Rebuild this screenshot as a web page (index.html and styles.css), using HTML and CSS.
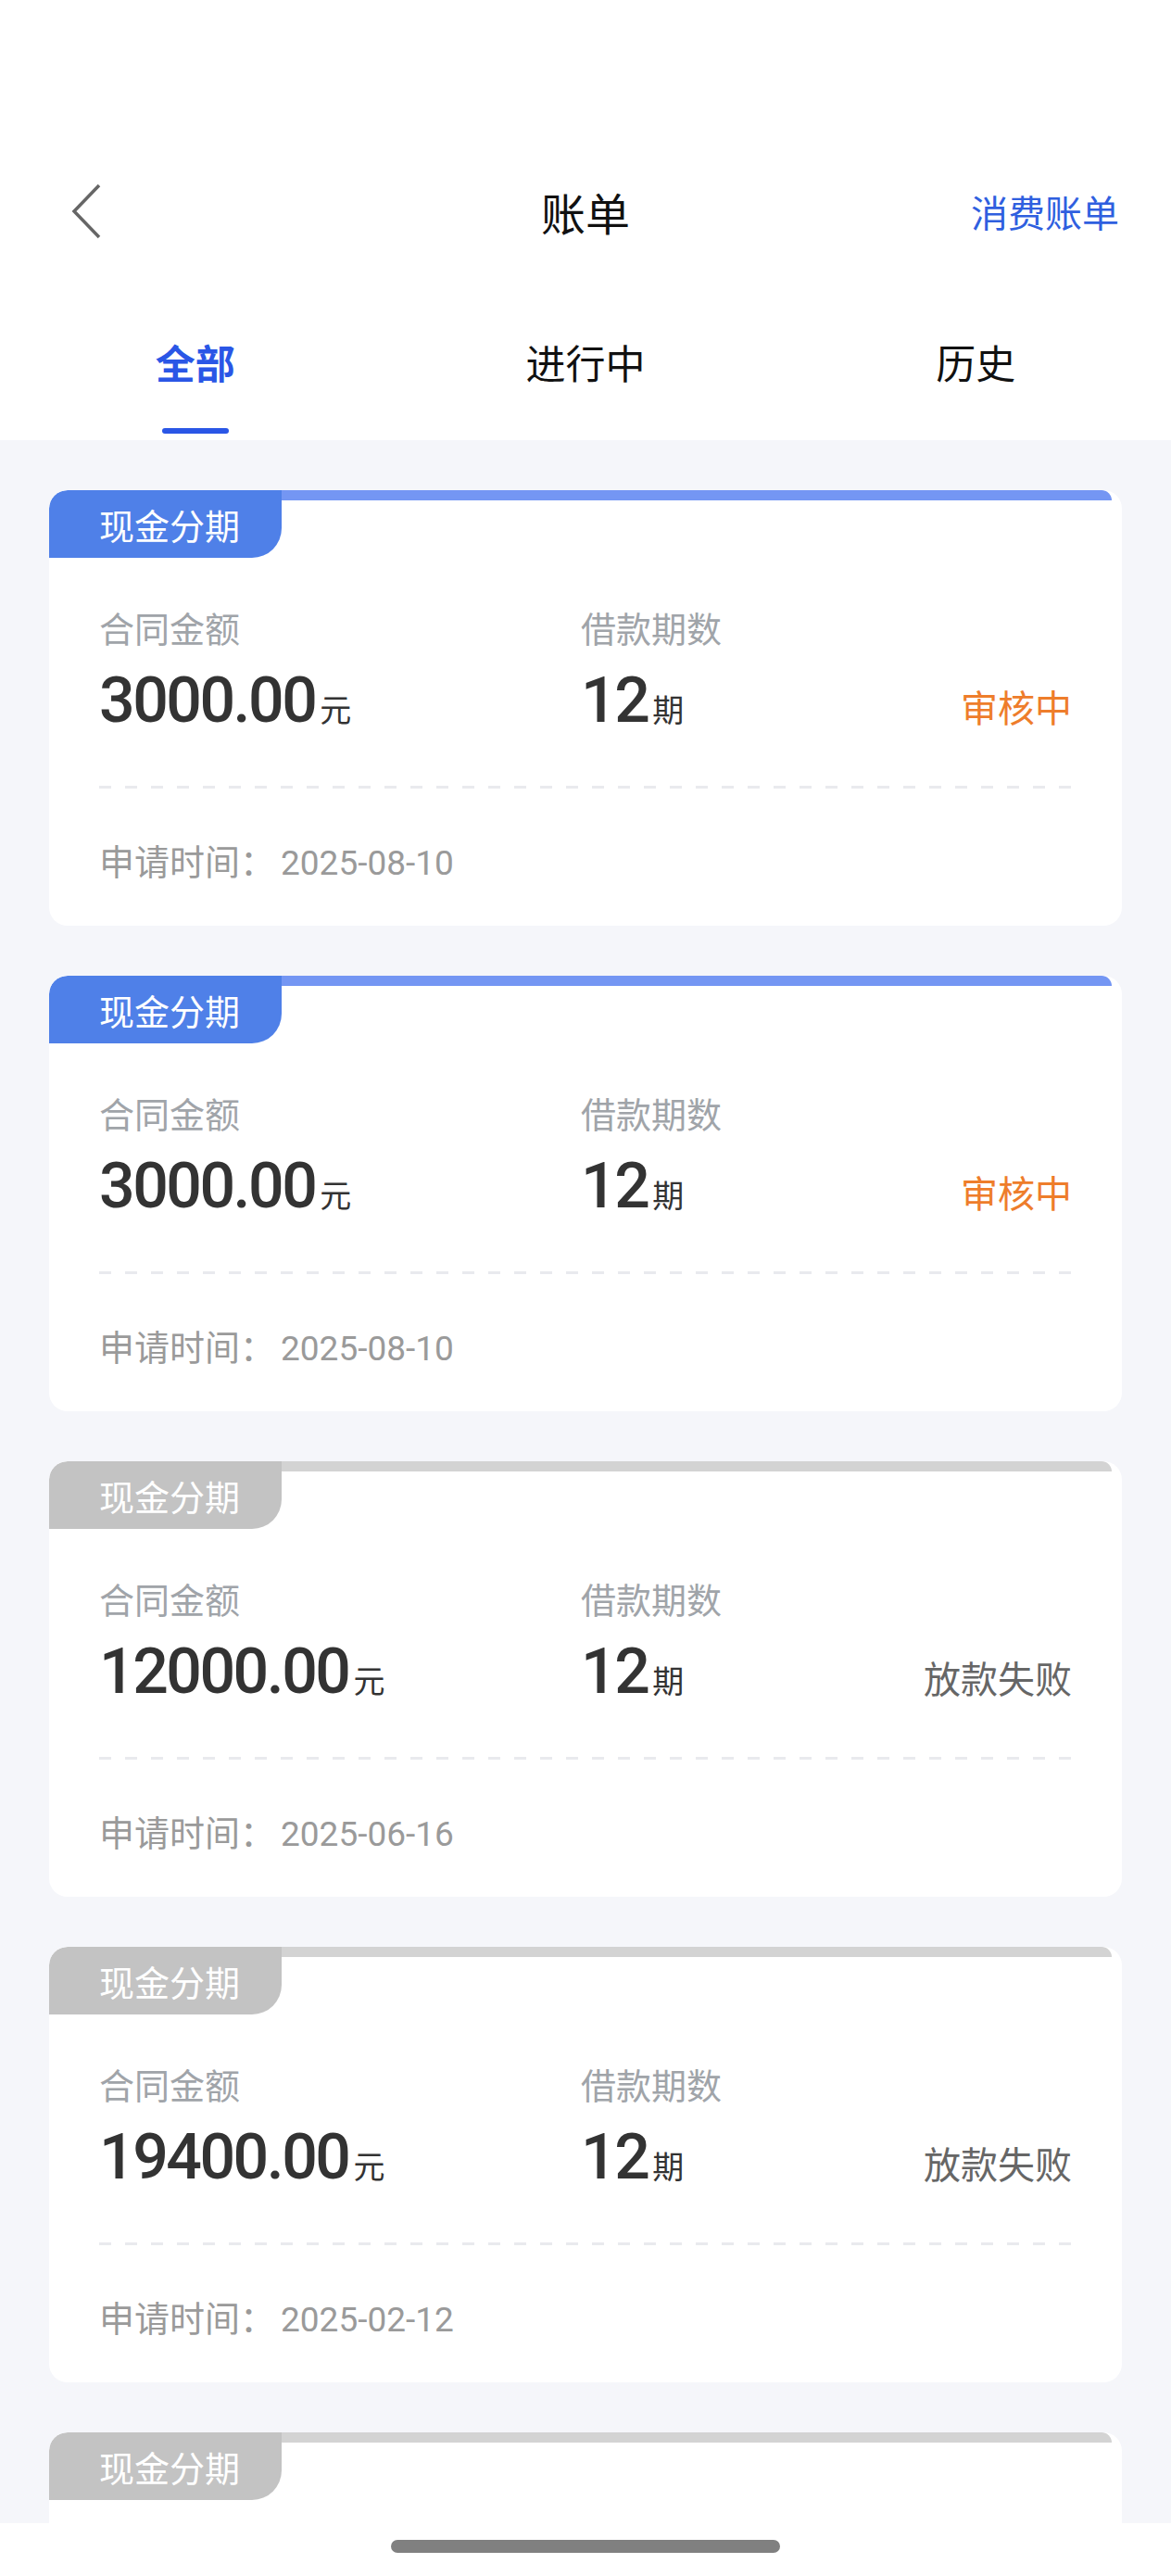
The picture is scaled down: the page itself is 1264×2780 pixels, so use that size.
FILE: index.html
```html
<!DOCTYPE html>
<html lang="zh-CN">

<head>
    <meta charset="UTF-8">
    <meta name="viewport" content="width=device-width, initial-scale=1.0">
    <title>账单</title>
    <link rel="stylesheet" href="styles.css">
</head>

<body>
    <div class="page">
        <div class="header">
            <div class="nav">
                <div class="back">
                    <svg width="34" height="60" viewBox="0 0 34 60">
                        <polyline points="31,2 4,30 31,58" fill="none" stroke="#666" stroke-width="3.5" stroke-linejoin="miter" />
                    </svg>
                </div>
                <div class="title">账单</div>
                <a class="more" href="#">消费账单</a>
            </div>
            <div class="tabs">
                <div class="tab active"><span>全部</span><i></i></div>
                <div class="tab"><span>进行中</span><i></i></div>
                <div class="tab"><span>历史</span><i></i></div>
            </div>
        </div>

        <div class="list">
            <div class="card">
                <div class="top">
                    <div class="tag">现金分期</div>
                    <div class="bar"></div>
                </div>
                <div class="body">
                    <div class="info">
                        <div class="label">合同金额</div>
                        <div class="label">借款期数</div>
                        <div></div>
                        <div class="value">3000.00<span class="unit">元</span></div>
                        <div class="value">12<span class="unit">期</span></div>
                        <div class="status orange">审核中</div>
                    </div>
                    <div class="dash"></div>
                    <div class="date">申请时间：<span>2025-08-10</span></div>
                </div>
            </div>

            <div class="card">
                <div class="top">
                    <div class="tag">现金分期</div>
                    <div class="bar"></div>
                </div>
                <div class="body">
                    <div class="info">
                        <div class="label">合同金额</div>
                        <div class="label">借款期数</div>
                        <div></div>
                        <div class="value">3000.00<span class="unit">元</span></div>
                        <div class="value">12<span class="unit">期</span></div>
                        <div class="status orange">审核中</div>
                    </div>
                    <div class="dash"></div>
                    <div class="date">申请时间：<span>2025-08-10</span></div>
                </div>
            </div>

            <div class="card gray">
                <div class="top">
                    <div class="tag">现金分期</div>
                    <div class="bar"></div>
                </div>
                <div class="body">
                    <div class="info">
                        <div class="label">合同金额</div>
                        <div class="label">借款期数</div>
                        <div></div>
                        <div class="value">12000.00<span class="unit">元</span></div>
                        <div class="value">12<span class="unit">期</span></div>
                        <div class="status">放款失败</div>
                    </div>
                    <div class="dash"></div>
                    <div class="date">申请时间：<span>2025-06-16</span></div>
                </div>
            </div>

            <div class="card gray">
                <div class="top">
                    <div class="tag">现金分期</div>
                    <div class="bar"></div>
                </div>
                <div class="body">
                    <div class="info">
                        <div class="label">合同金额</div>
                        <div class="label">借款期数</div>
                        <div></div>
                        <div class="value">19400.00<span class="unit">元</span></div>
                        <div class="value">12<span class="unit">期</span></div>
                        <div class="status">放款失败</div>
                    </div>
                    <div class="dash"></div>
                    <div class="date">申请时间：<span>2025-02-12</span></div>
                </div>
            </div>

            <!-- next card, only its top shows above the home bar -->
            <div class="card gray partial">
                <div class="top">
                    <div class="tag">现金分期</div>
                    <div class="bar"></div>
                </div>
            </div>
        </div>

        <div class="home">
            <span></span>
        </div>
    </div>
</body>

</html>
```

FILE: styles.css
```css
html, body {
    margin: 0;
    padding: 0;
}
body {
    font-family: "Noto Sans CJK SC", "Noto Sans", sans-serif;
    color: #111;
    background: #fff;
}
.page {
    height: 100vh;
    display: flex;
    flex-direction: column;
    overflow: hidden;
}

/*--------------------------*/
.header {
    background: #fff;
    padding-top: 178px;
    flex-shrink: 0;
}
.nav {
    height: 100px;
    display: grid;
    grid-template-columns: 1fr auto 1fr;
    align-items: center;
    padding: 0 56px;
}
.back svg {
    display: block;
    margin-left: 20px;
}
.title {
    font-size: 48px;
    line-height: 1;
    color: #111;
}
.more {
    justify-self: end;
    font-size: 40px;
    line-height: 1;
    color: #2f5fdf;
    text-decoration: none;
}
.tabs {
    display: flex;
    padding: 84px 0 7px;
}
.tab {
    flex: 1;
    display: flex;
    flex-direction: column;
    align-items: center;
}
.tab span {
    font-size: 43px;
    line-height: 56px;
    color: #111;
}
.tab i {
    display: block;
    width: 72px;
    height: 6px;
    border-radius: 3px;
    margin-top: 44px;
}
.tab.active span {
    color: #2a56e6;
    font-weight: bold;
}
.tab.active i {
    background: #2a56e6;
}

/*--------------------------*/
.list {
    flex: 1;
    overflow: hidden;
    background: #f5f6fa;
    padding: 54px 53px 0;
    display: flex;
    flex-direction: column;
    gap: 54px;
}
.card {
    flex-shrink: 0;
    background: #fff;
    border-radius: 20px;
    overflow: hidden;
}
.card.partial {
    height: 470px;
}
.card .top {
    display: flex;
    align-items: flex-start;
}
.card .tag {
    width: 251px;
    height: 73px;
    box-sizing: border-box;
    padding-left: 54px;
    font-size: 38px;
    line-height: 73px;
    color: #fff;
    background: #4f80e8;
    border-top-left-radius: 20px;
    border-bottom-right-radius: 32px;
}
.card .bar {
    flex: 1;
    height: 11px;
    margin-right: 11px;
    background: #7496f3;
    border-top-right-radius: 12px;
}
.card.gray .tag {
    background: #c3c3c3;
}
.card.gray .bar {
    background: #d3d3d3;
}
.card .body {
    padding: 53px 54px 45px;
}
.info {
    display: grid;
    grid-template-columns: 520px 1fr auto;
    align-items: baseline;
    row-gap: 22px;
}
.label {
    font-size: 38px;
    line-height: 44px;
    color: #a0a4a9;
}
.value {
    font-family: Roboto, "Noto Sans CJK SC", sans-serif;
    font-weight: 500;
    font-size: 68px;
    line-height: 70px;
    letter-spacing: -2.5px;
    color: #333;
}
.value .unit {
    font-family: "Noto Sans CJK SC", sans-serif;
    font-weight: normal;
    font-size: 34px;
    line-height: 1;
    letter-spacing: 0;
    margin-left: 5px;
}
.status {
    font-size: 40px;
    line-height: 1;
    color: #666;
}
.status.orange {
    color: #ee7d2b;
}
.dash {
    height: 3px;
    margin-top: 57px;
    background: repeating-linear-gradient(to right, #e9eaee 0, #e9eaee 13px, transparent 13px, transparent 28px);
}
.date {
    margin-top: 55px;
    font-size: 38px;
    line-height: 44px;
    color: #9a9a9a;
}
.date span {
    font-family: Roboto, sans-serif;
    font-size: 37px;
    margin-left: 6px;
}

/*--------------------------*/
.home {
    flex-shrink: 0;
    height: 57px;
    background: #fff;
    display: flex;
    justify-content: center;
    padding-top: 18px;
    box-sizing: border-box;
}
.home span {
    width: 420px;
    height: 14px;
    border-radius: 7px;
    background: #808080;
}
```
